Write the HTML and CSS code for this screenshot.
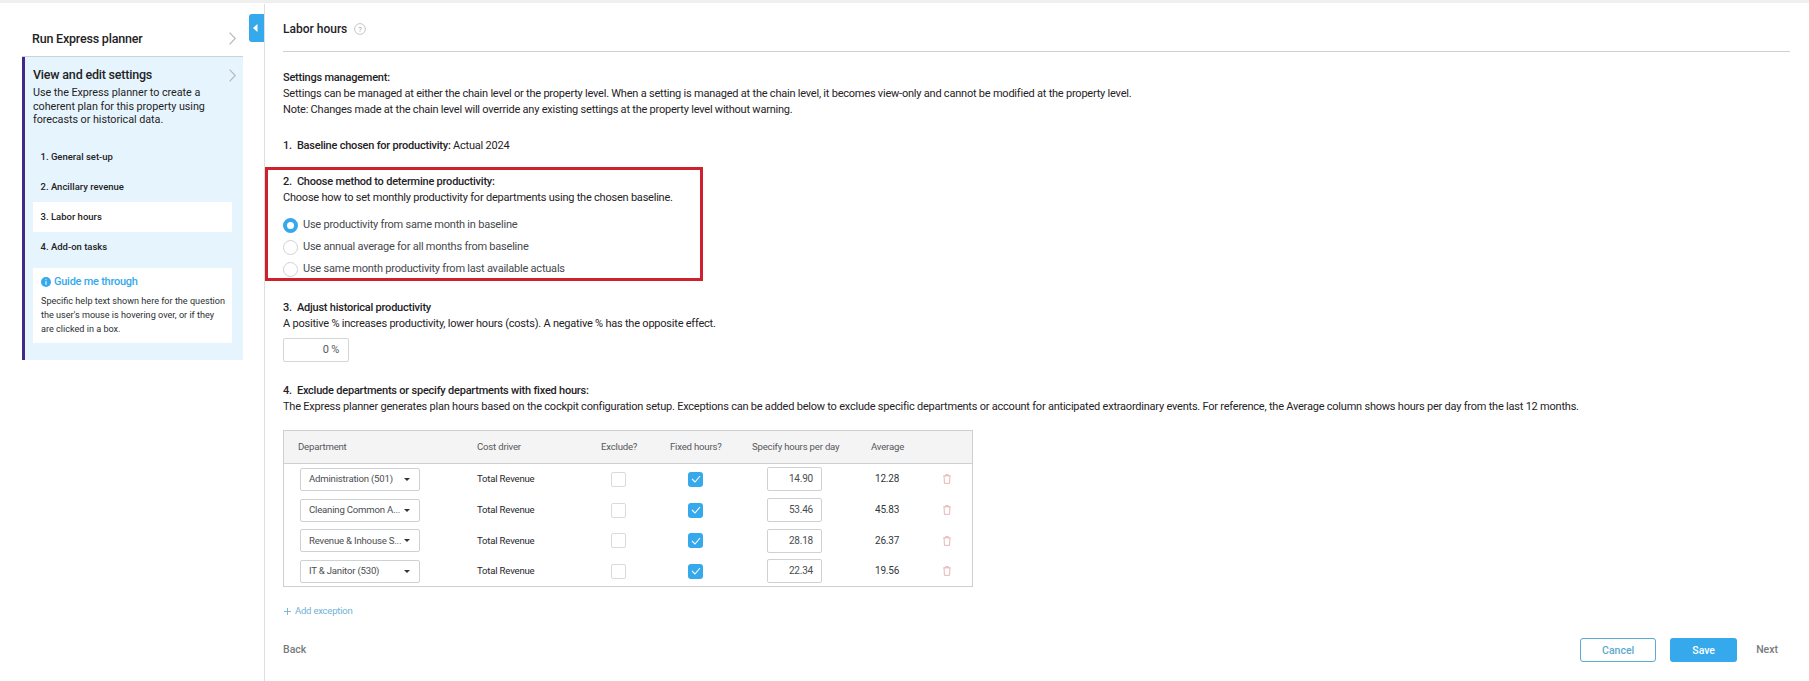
FILE: index.html
```html
<!DOCTYPE html>
<html lang="en">
<head>
<meta charset="utf-8">
<title>Labor hours</title>
<link rel="stylesheet" href="styles.css">
</head>
<body>
<div class="page">
  <aside class="sidebar">
    <button class="collapse" aria-label="Collapse"><svg width="5" height="8" viewBox="0 0 5 8"><path d="M4.5 0v8L0 4z" fill="#fff"/></svg></button>
    <div class="run-row">
      <span>Run Express planner</span>
      <svg class="chev" width="7" height="13" viewBox="0 0 7 13"><path d="M.6 .6l5.6 5.9-5.6 5.9" fill="none" stroke="#b5b8bb" stroke-width="1.2"/></svg>
    </div>
    <div class="panel">
      <div class="panel-head">
        <span>View and edit settings</span>
        <svg class="chev" width="7" height="13" viewBox="0 0 7 13"><path d="M.6 .6l5.6 5.9-5.6 5.9" fill="none" stroke="#b5b8bb" stroke-width="1.2"/></svg>
      </div>
      <p class="panel-text">Use the Express planner to create a coherent plan for this property using forecasts or historical data.</p>
      <ul class="steps">
        <li>1. General set-up</li>
        <li>2. Ancillary revenue</li>
        <li class="active">3. Labor hours</li>
        <li>4. Add-on tasks</li>
      </ul>
      <div class="guide">
        <div class="guide-title"><svg width="10" height="10" viewBox="0 0 11 11"><circle cx="5.5" cy="5.5" r="5.5" fill="#35a9ec"/><path d="M5.5 2.4v1.2M5.5 4.8v3.6" stroke="#fff" stroke-width="1.2"/></svg>Guide me through</div>
        <p>Specific help text shown here for the question the user's mouse is hovering over, or if they are clicked in a box.</p>
      </div>
    </div>
  </aside>
  <main class="main">
    <header class="title-row">
      <h1>Labor hours</h1>
      <svg width="12" height="12" viewBox="0 0 12 12"><circle cx="6" cy="6" r="5.4" fill="none" stroke="#b4b7ba" stroke-width="0.8"/><text x="6" y="8.6" text-anchor="middle" class="q">?</text></svg>
    </header>
    <section class="intro">
      <p><b>Settings management:</b></p>
      <p>Settings can be managed at either the chain level or the property level. When a setting is managed at the chain level, it becomes view-only and cannot be modified at the property level.</p>
      <p>Note: Changes made at the chain level will override any existing settings at the property level without warning.</p>
    </section>
    <section class="s1"><p><b>1.&nbsp; Baseline chosen for productivity:</b> Actual 2024</p></section>
    <section class="s2">
      <div class="highlight"></div>
      <p><b>2.&nbsp; Choose method to determine productivity:</b></p>
      <p>Choose how to set monthly productivity for departments using the chosen baseline.</p>
      <div class="radios">
        <label class="radio"><span class="dot on"></span>Use productivity from same month in baseline</label>
        <label class="radio"><span class="dot"></span>Use annual average for all months from baseline</label>
        <label class="radio"><span class="dot"></span>Use same month productivity from last available actuals</label>
      </div>
    </section>
    <section class="s3">
      <p><b>3.&nbsp; Adjust historical productivity</b></p>
      <p>A positive % increases productivity, lower hours (costs). A negative % has the opposite effect.</p>
      <div class="pct">0 %</div>
    </section>
    <section class="s4">
      <p><b>4.&nbsp; Exclude departments or specify departments with fixed hours:</b></p>
      <p>The Express planner generates plan hours based on the cockpit configuration setup. Exceptions can be added below to exclude specific departments or account for anticipated extraordinary events. For reference, the Average column shows hours per day from the last 12 months.</p>
    </section>
    <div class="table">
      <div class="thead">
        <span>Department</span><span>Cost driver</span><span>Exclude?</span><span>Fixed hours?</span><span>Specify hours per day</span><span>Average</span>
      </div>
      <div class="row">
        <div class="select"><span>Administration (501)</span><i></i></div><span class="driver">Total Revenue</span><span class="box"></span><span class="box checked"><svg width="10" height="8" viewBox="0 0 10 8"><path d="M1 4l3 3 5-6" fill="none" stroke="#fff" stroke-width="1.1"/></svg></span><div class="hours">14.90</div><span class="avg">12.28</span><svg class="trash" width="8" height="10" viewBox="0 0 9 11"><path d="M.3 2h8.4M3 2V.6h3V2M1.2 2l.4 8.4h5.8L7.8 2" fill="none" stroke="#e2a3a5" stroke-width="0.9"/></svg>
      </div>
      <div class="row">
        <div class="select"><span>Cleaning Common A...</span><i></i></div><span class="driver">Total Revenue</span><span class="box"></span><span class="box checked"><svg width="10" height="8" viewBox="0 0 10 8"><path d="M1 4l3 3 5-6" fill="none" stroke="#fff" stroke-width="1.1"/></svg></span><div class="hours">53.46</div><span class="avg">45.83</span><svg class="trash" width="8" height="10" viewBox="0 0 9 11"><path d="M.3 2h8.4M3 2V.6h3V2M1.2 2l.4 8.4h5.8L7.8 2" fill="none" stroke="#e2a3a5" stroke-width="0.9"/></svg>
      </div>
      <div class="row">
        <div class="select"><span>Revenue &amp; Inhouse S...</span><i></i></div><span class="driver">Total Revenue</span><span class="box"></span><span class="box checked"><svg width="10" height="8" viewBox="0 0 10 8"><path d="M1 4l3 3 5-6" fill="none" stroke="#fff" stroke-width="1.1"/></svg></span><div class="hours">28.18</div><span class="avg">26.37</span><svg class="trash" width="8" height="10" viewBox="0 0 9 11"><path d="M.3 2h8.4M3 2V.6h3V2M1.2 2l.4 8.4h5.8L7.8 2" fill="none" stroke="#e2a3a5" stroke-width="0.9"/></svg>
      </div>
      <div class="row">
        <div class="select"><span>IT &amp; Janitor (530)</span><i></i></div><span class="driver">Total Revenue</span><span class="box"></span><span class="box checked"><svg width="10" height="8" viewBox="0 0 10 8"><path d="M1 4l3 3 5-6" fill="none" stroke="#fff" stroke-width="1.1"/></svg></span><div class="hours">22.34</div><span class="avg">19.56</span><svg class="trash" width="8" height="10" viewBox="0 0 9 11"><path d="M.3 2h8.4M3 2V.6h3V2M1.2 2l.4 8.4h5.8L7.8 2" fill="none" stroke="#e2a3a5" stroke-width="0.9"/></svg>
      </div>
    </div>
    <a class="add"><svg width="9" height="9" viewBox="0 0 9 9"><path d="M4.5 1v7M1 4.5h7" stroke="#6fb1d6" stroke-width="0.9"/></svg>Add exception</a>
    <footer class="footer">
      <span class="link">Back</span>
      <div class="actions">
        <button class="btn cancel">Cancel</button>
        <button class="btn save">Save</button>
        <span class="link">Next</span>
      </div>
    </footer>
  </main>
</div>
</body>
</html>
```
FILE: styles.css
```css
* { box-sizing: border-box; }
html, body { margin: 0; padding: 0; }
body {
  width: 1809px;
  height: 681px;
  overflow: hidden;
  background: #efefef;
  color: #1f2326;
  font: 11px/16px Roboto, "Liberation Sans", sans-serif;
  letter-spacing: -0.22px;
}
p { margin: 0; }
b { font-weight: 500; }
.page {
  display: flex;
  height: 678px;
  margin-top: 3px;
  background: #fff;
  border-top: 1px solid #fff;
}
.sidebar {
  position: relative;
  width: 265px;
  flex: none;
  padding: 0 21px 0 22px;
  border-right: 1px solid #dcdedf;
}
.collapse {
  position: absolute;
  left: 249px;
  top: 10px;
  display: flex;
  align-items: center;
  justify-content: center;
  width: 15px;
  height: 28px;
  padding: 0 2px 0 0;
  border: 0;
  border-radius: 3px 0 0 3px;
  background: #35a9ec;
}
.run-row {
  display: flex;
  justify-content: space-between;
  align-items: center;
  height: 53px;
  padding: 17px 7px 0 10px;
  font-size: 12.5px;
  letter-spacing: -0.2px;
  border-bottom: 1px solid #c9d3da;
}
.run-row span, .panel-head span { font-weight: 500; }
.panel {
  height: 303px;
  padding: 8px 7px 0 8px;
  background: #e6f5fd;
  border-left: 3px solid #40298a;
}
.panel-head {
  display: flex;
  justify-content: space-between;
  align-items: center;
  height: 20px;
  font-size: 12.5px;
  letter-spacing: -0.2px;
}
.panel-text { margin-top: 1px; width: 176px; font-size: 10.8px; line-height: 13.7px; letter-spacing: -0.05px; }
.steps { list-style: none; margin: 15px 0 0; padding: 0; width: 199px; font-size: 9.5px; font-weight: 500; letter-spacing: 0; }
.steps li { height: 30px; line-height: 30px; padding-left: 7.5px; }
.steps .active { background: #fff; }
.guide {
  width: 199px;
  height: 75px;
  margin-top: 6px;
  padding: 5px 6px 5px 8px;
  background: #fff;
}
.guide-title {
  display: flex;
  align-items: center;
  gap: 3px;
  height: 18px;
  color: #35a9ec;
  font-size: 11px;
  font-weight: 500;
  letter-spacing: -0.25px;
}
.guide p { margin-top: 4px; font-size: 9.1px; line-height: 13.7px; letter-spacing: 0; color: #2b2f33; }
.main { flex: 1; padding: 0 19px 0 18px; min-width: 0; }
.title-row {
  display: flex;
  align-items: flex-start;
  gap: 7px;
  height: 48px;
  padding-top: 17px;
  border-bottom: 1px solid #cfd2d4;
}
.title-row svg { margin-top: 2px; }
h1 { margin: 0; font-size: 12px; line-height: 16px; font-weight: 500; letter-spacing: 0; }
.q { font: 7.5px Roboto, sans-serif; fill: #a0a4a7; }
.intro { margin-top: 18px; }
.s1 { margin-top: 20px; }
.s2 { position: relative; margin-top: 20px; }
.highlight {
  position: absolute;
  left: -18px;
  top: -7px;
  width: 438px;
  height: 114px;
  border: 3px solid #d0202e;
  pointer-events: none;
}
.radios { margin-top: 8px; color: #45494d; }
.radio { display: flex; align-items: center; gap: 5px; height: 22px; }
.dot {
  width: 15px;
  height: 15px;
  flex: none;
  border: 1px solid #cfd2d4;
  border-radius: 50%;
  background: #fff;
}
.dot.on { border: 4.5px solid #35a9ec; }
.s3 { margin-top: 20px; }
.pct {
  width: 66px;
  height: 24px;
  margin-top: 6px;
  padding-right: 9px;
  border: 1px solid #d3d5d7;
  border-radius: 2px;
  text-align: right;
  line-height: 22px;
  color: #55595d;
}
.s4 { margin-top: 21px; }
.table {
  width: 690px;
  height: 157px;
  margin-top: 15px;
  border: 1px solid #cdcfd1;
  font-size: 9.6px;
  letter-spacing: -0.2px;
}
.thead, .row {
  display: grid;
  grid-template-columns: 179px 124px 69px 82px 119px 60px 1fr;
  align-items: center;
  padding-left: 14px;
}
.thead {
  height: 33px;
  background: #f4f4f4;
  border-bottom: 1px solid #cdcfd1;
  color: #55595d;
}
.row { height: 30.7px; }
.select {
  display: flex;
  align-items: center;
  justify-content: space-between;
  width: 120px;
  height: 23px;
  margin-left: 2px;
  padding: 0 9px 0 8px;
  border: 1px solid #cfd2d4;
  border-radius: 2px;
  color: #4a4e52;
}
.select span { white-space: nowrap; }
.select i { border: 3px solid transparent; border-top: 3.5px solid #333; border-bottom: 0; }
.driver { color: #26292c; }
.box {
  display: flex;
  align-items: center;
  justify-content: center;
  width: 15px;
  height: 15px;
  margin-left: 10px;
  border: 1px solid #d8dadc;
  border-radius: 2px;
}
.box.checked { margin-left: 18px; border: 0; border-radius: 3px; background: #35a9ec; }
.hours {
  width: 55px;
  height: 24px;
  margin-left: 15px;
  padding-right: 8px;
  border: 1px solid #cfd2d4;
  border-radius: 2px;
  text-align: right;
  line-height: 22px;
  color: #4a4e52;
  font-size: 10px;
}
.avg { margin-left: 4px; color: #33373a; font-size: 10px; }
.trash { margin-left: 12px; }
.add {
  display: flex;
  align-items: center;
  gap: 3px;
  margin-top: 16px;
  color: #6fb1d6;
  font-size: 9.5px;
}
.footer {
  display: flex;
  justify-content: space-between;
  align-items: center;
  height: 24px;
  margin-top: 19px;
}
.link { color: #777b7e; font-size: 10.5px; font-weight: 500; letter-spacing: 0; }
.actions { display: flex; align-items: center; }
.btn {
  width: 76px;
  height: 24px;
  padding: 0;
  border-radius: 3px;
  font: 500 10.5px Roboto, sans-serif;
}
.cancel { background: #fff; border: 1px solid #5da9cf; color: #5da9cf; }
.save { width: 67px; margin: 0 19px 0 14px; background: #35a9ec; border: 0; color: #fff; }
.actions .link { margin-right: 12px; }
```
